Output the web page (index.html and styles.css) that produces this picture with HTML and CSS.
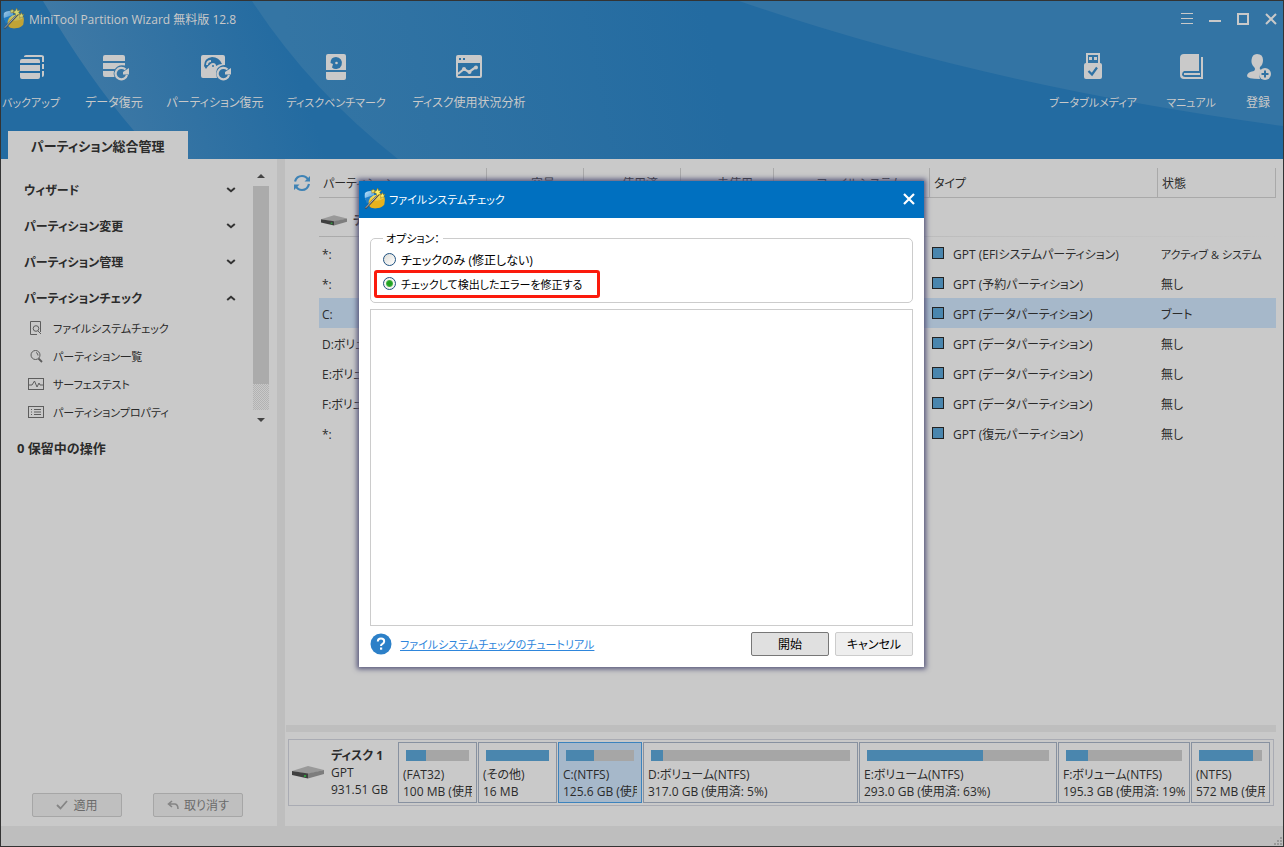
FILE: index.html
```html
<!DOCTYPE html>
<html lang="ja">
<head>
<meta charset="utf-8">
<title>MiniTool Partition Wizard 無料版 12.8</title>
<link rel="stylesheet" href="styles.css">
</head>
<body>
<svg class="defs" width="0" height="0" aria-hidden="true">
  <defs>
    <linearGradient id="gold" x1="0" y1="0" x2="0" y2="1"><stop offset="0" stop-color="#f8e765"/><stop offset="1" stop-color="#dc9a12"/></linearGradient>
    <linearGradient id="sky" x1="0" y1="0" x2="1" y2="1"><stop offset="0" stop-color="#c5e6fa"/><stop offset="1" stop-color="#2b8ad4"/></linearGradient>
    <symbol id="logo" viewBox="0 0 24 24">
      <path d="M1 6Q2 3 10 3L12 10 3 14Q0 12 1 6Z" fill="url(#sky)"/>
      <path d="M1 11L10 8 9 14 3 17Z" fill="#1f7fca"/>
      <path d="M5 18Q4 9 14 7Q23 6 22.500 13L22 18Q20 22 12 22Q6 22 5 18Z" fill="url(#gold)"/>
      <path d="M8 13Q15 16 22.500 11L22 18Q19 22 12 22Q6 22 5.500 18Z" fill="#e8b21c"/>
      <path d="M1.500 22.500L16 7" stroke="#4b4b4b" stroke-width="2.200"/><path d="M2 21.500L16 6.500" stroke="#d8d8d8" stroke-width=".8"/>
      <path d="M15 0l1 3 3-.5-2 2.500 2 2.500-3-.5-2 2-.5-3-3-1.500 3-1.500zM20 5l.8 2 2.200 0-1.500 1.700.8 2.300-2.300-1-1.800 1.200.2-2.300-1.600-1.500 2.200-.3zM10 1l.8 1.500 1.700.3-1.200 1.200.2 1.700-1.500-.8-1.500.8.3-1.700-1.300-1.200 1.700-.3z" fill="#fff06a" stroke="#8d6a12" stroke-width=".5"/>
    </symbol>
    <symbol id="drive" viewBox="0 0 32 13">
      <path d="M0 5L16 0 32 4 16 8Z" fill="#999"/><path d="M0 5L16 7.500V12.500L0 9Z" fill="#3f3f3f"/><path d="M16 7.500L32 4V8L16 12.500Z" fill="#7d7d7d"/><rect x="12" y="9" width="2" height="2" fill="#2d9b3b"/>
    </symbol>
    <symbol id="chev" viewBox="0 0 10 6"><path d="M1.200 1L5 4.200 8.800 1" fill="none" stroke="#333" stroke-width="2"/></symbol>
  </defs>
</svg>
<div class="window">
  <header class="banner">
    <svg class="banner-art" viewBox="0 0 1282 158" preserveAspectRatio="none" aria-hidden="true">
      <defs>
        <linearGradient id="g1" gradientUnits="userSpaceOnUse" x1="60" y1="60" x2="270" y2="-10"><stop offset="0" stop-color="#3f79a5"/><stop offset="1" stop-color="#236ba1"/></linearGradient>
        <linearGradient id="g2" gradientUnits="userSpaceOnUse" x1="290" y1="60" x2="700" y2="-20"><stop offset="0" stop-color="#3475a4"/><stop offset="1" stop-color="#236ba1"/></linearGradient>
      </defs>
      <path d="M42 0Q88 78 134 131L152 158H600V0Z" fill="url(#g1)"/>
      <path d="M251 0Q310 90 397 158H1000V0Z" fill="url(#g2)"/>
      <path d="M738 0Q980 84 1282 125V0Z" fill="#3374a4"/>
    </svg>
    <div class="titlebar">
      <svg class="app-logo"><use href="#logo"/></svg>
      <h1 class="app-title">MiniTool Partition Wizard 無料版 12.8</h1>
      <div class="win-buttons">
        <button aria-label="メニュー"><svg width="14" height="14"><path d="M1 1.500H13M1 6.500H13M1 11.500H13" stroke="#c9c9c9"/></svg></button>
        <button aria-label="最小化"><svg width="14" height="14"><path d="M1 9H13" stroke="#c9c9c9" stroke-width="2"/></svg></button>
        <button aria-label="最大化"><svg width="14" height="14"><rect x="2" y="2" width="10" height="10" fill="none" stroke="#c9c9c9" stroke-width="2"/></svg></button>
        <button aria-label="閉じる"><svg width="14" height="14"><path d="M2 2L12 12M12 2L2 12" stroke="#c9c9c9" stroke-width="2"/></svg></button>
      </div>
    </div>
    <nav class="toolbar">
      <div class="tools tools-left">
        <button class="kana"><svg width="30" height="30" viewBox="0 0 30 30"><g fill="#c9c9c9"><path d="M4 11V9Q4 7 6 7H22Q24 7 24 9V11Z"/><path d="M4 13H24V19H4ZM4 21H24V25Q24 27 22 27H6Q4 27 4 25Z"/><path d="M8 5V4.500Q8 3 10 3H25Q28 3 28 5V10H26V5ZM26 12H28V17H26ZM26 19H28V23Q28 25 26 25Z"/></g></svg><span>バックアップ</span></button>
        <button><svg width="30" height="30" viewBox="0 0 30 30"><path fill="#c9c9c9" d="M4 5Q4 3 6 3H24Q26 3 26 5V9H4ZM4 11H26V13.500Q19 12 16 17H4ZM4 19H15Q14 22 15.500 25H6Q4 25 4 23Z"/><path d="M26.500 17.500A5.800 5.800 0 1 0 28 23" fill="none" stroke="#c9c9c9" stroke-width="2.200"/><path d="M24 20V22.500H30V16Z" fill="#c9c9c9"/></svg><span>データ復元</span></button>
        <button><svg width="32" height="30" viewBox="0 0 32 30"><path fill="#c9c9c9" fill-rule="evenodd" d="M2 5Q2 3 4 3H24Q26 3 26 5V13Q21 13 18 17L17 21 18 26H4Q2 26 2 24ZM5 14Q5 6 13 5Q20 5 23 12Q20 12 17 14Q12 9 7 17Z"/><path d="M8 13Q8 9 12 9" fill="none" stroke="#c9c9c9" stroke-width="2"/><circle cx="14" cy="14" r="3" fill="#c9c9c9"/><circle cx="14" cy="14" r="1" fill="#2d70a2"/><path d="M28.500 17.500A5.800 5.800 0 1 0 30 23" fill="none" stroke="#c9c9c9" stroke-width="2.200"/><path d="M26 20V22.500H32V16Z" fill="#c9c9c9"/></svg><span>パーティション復元</span></button>
        <button class="kana"><svg width="30" height="30" viewBox="0 0 30 30"><path fill="#c9c9c9" d="M5 4Q5 2 7 2H23Q25 2 25 4V18H5ZM5 20H25V26Q25 28 23 28H7Q5 28 5 26Z"/><path d="M15 5A6 6 0 1 1 11 15.500L12 12 9.500 11Q9.500 5 15 5Z" fill="#2d72a5"/><circle cx="15.500" cy="11" r="1.300" fill="#c9c9c9"/></svg><span>ディスクベンチマーク</span></button>
        <button><svg width="30" height="30" viewBox="0 0 30 30"><path fill="#c9c9c9" fill-rule="evenodd" d="M2 5Q2 3 4 3H26Q28 3 28 5V24Q28 26 26 26H4Q2 26 2 24ZM4 11V24H26V11ZM5 6V8H7V6ZM9 6V8H11V6Z"/><path d="M4 22L10 17 15 20 22 15" fill="none" stroke="#c9c9c9" stroke-width="2.200"/><g fill="#c9c9c9"><circle cx="10" cy="17" r="2"/><circle cx="15.500" cy="20" r="2"/><circle cx="22" cy="15.500" r="2"/></g></svg><span>ディスク使用状況分析</span></button>
      </div>
      <div class="tools tools-right">
        <button class="kana"><svg width="30" height="30" viewBox="0 0 30 30"><path fill="#c9c9c9" fill-rule="evenodd" d="M8 1H22V11Q24 11 24 13V25Q24 27 22 27H8Q6 27 6 25V13Q6 11 8 11ZM10 3V11H20V3ZM11 5H14V8H11ZM16 5H19V8H16Z"/><path d="M10.500 19L14 22.500 19 15.500" fill="none" stroke="#2f72a4" stroke-width="2.200"/></svg><span>ブータブルメディア</span></button>
        <button class="kana"><svg width="30" height="30" viewBox="0 0 30 30"><path fill="#c9c9c9" fill-rule="evenodd" d="M4 6Q4 2 8 2H23V19H8Q6 20 6 23Q7 25 9 25H25V5H27V27H8Q4 27 4 23ZM8 21H24V23H8Z"/></svg><span>マニュアル</span></button>
        <button><svg width="30" height="30" viewBox="0 0 30 30"><path fill="#c9c9c9" d="M14 2Q20 2 20 8Q20 13 17 15Q16 18 19 18Q15 21 17 27Q4 27 4 24Q4 20 11 19Q13 17 11 15Q8 12 8.500 8Q9 2 14 2Z"/><circle cx="22" cy="22" r="6" fill="#c9c9c9"/><path d="M22 18.500V25.500M18.500 22H25.500" stroke="#3072a3" stroke-width="2"/></svg><span>登録</span></button>
      </div>
    </nav>
    <div class="tabs" role="tablist"><button class="tab" role="tab" aria-selected="true">パーティション総合管理</button></div>
  </header>

  <main class="workspace">
    <aside class="sidebar">
      <div class="side-scroll">
        <div class="side-list">
          <button class="group">ウィザード<svg class="chev"><use href="#chev"/></svg></button>
          <button class="group">パーティション変更<svg class="chev"><use href="#chev"/></svg></button>
          <button class="group">パーティション管理<svg class="chev"><use href="#chev"/></svg></button>
          <button class="group" aria-expanded="true">パーティションチェック<svg class="chev chev-open"><use href="#chev"/></svg></button>
          <ul class="actions">
            <li><button><svg width="16" height="16" fill="none" stroke="#5d5d5d"><path d="M9 14.500H2.500V1.500H12.500V12"/><circle cx="8" cy="8.500" r="2.800"/><path d="M10 11L13 14"/></svg>ファイルシステムチェック</button></li>
            <li><button><svg width="16" height="16" fill="none" stroke="#5d5d5d"><circle cx="7.500" cy="7" r="4.500"/><path d="M8 4.500Q10 5 10 7.500"/><path d="M10.500 10.500L14 14" stroke-width="1.800"/></svg>パーティション一覧</button></li>
            <li><button><svg width="16" height="16" fill="none" stroke="#5d5d5d"><rect x=".5" y="2.500" width="15" height="11"/><path d="M1 9H4L6.500 5 9 11 11 7 12 9H15"/></svg>サーフェステスト</button></li>
            <li><button><svg width="16" height="16" fill="none" stroke="#5d5d5d"><rect x=".5" y="2.500" width="15" height="11"/><path d="M3 5.500H4M6 5.500H13M3 8H4M6 8H13M3 10.500H4M6 10.500H13" stroke-width="1.200"/></svg>パーティションプロパティ</button></li>
          </ul>
        </div>
        <div class="scrollbar" aria-hidden="true">
          <svg width="8" height="4"><path d="M0 4L4 0 8 4Z" fill="#444"/></svg>
          <div class="track"><div class="thumb"></div></div>
          <svg width="8" height="4"><path d="M0 0L4 4 8 0Z" fill="#444"/></svg>
        </div>
      </div>
      <h2 class="pending">0 保留中の操作</h2>
      <div class="side-buttons">
        <button disabled><svg width="12" height="10" fill="none" stroke="#858585" stroke-width="1.800"><path d="M1 5L4.500 8.500 11 1"/></svg>適用</button>
        <button disabled><svg width="12" height="10" fill="none" stroke="#858585" stroke-width="1.600"><path d="M5 1L1.500 4 5 7M1.500 4H8Q11 4.500 11 9"/></svg>取り消す</button>
      </div>
    </aside>

    <section class="content">
      <div class="list-pane">
        <button class="refresh" aria-label="更新"><svg width="18" height="18" fill="none" stroke="#3f83b5" stroke-width="2.200"><path d="M2 7.500Q3.500 2 9 2Q13 2 15 5.500M16 10Q14.500 16 9 16Q5 16 3 12.500"/><path d="M17 2V7.500H11.500ZM1 16V10.500H6.500Z" fill="#3f83b5" stroke="none"/></svg></button>
        <table class="volumes">
          <colgroup><col class="c-name"><col class="c-size"><col class="c-size"><col class="c-free"><col class="c-fs"><col class="c-type"><col></colgroup>
          <thead><tr><th>パーティション</th><th class="mid">容量</th><th class="mid">使用済</th><th class="mid">未使用</th><th class="mid">ファイルシステム</th><th>タイプ</th><th>状態</th></tr></thead>
          <tbody>
            <tr class="disk-row"><td colspan="7"><span><svg width="26" height="11"><use href="#drive"/></svg>ディスク 1</span></td></tr>
            <tr><td>*:</td><td></td><td></td><td></td><td></td><td class="type">GPT (EFIシステムパーティション)</td><td class="kana">アクティブ &amp; システム</td></tr>
            <tr><td>*:</td><td></td><td></td><td></td><td></td><td class="type">GPT (予約パーティション)</td><td>無し</td></tr>
            <tr class="selected"><td>C:</td><td></td><td></td><td></td><td></td><td class="type">GPT (データパーティション)</td><td>ブート</td></tr>
            <tr><td>D:ボリューム</td><td></td><td></td><td></td><td></td><td class="type">GPT (データパーティション)</td><td>無し</td></tr>
            <tr><td>E:ボリューム</td><td></td><td></td><td></td><td></td><td class="type">GPT (データパーティション)</td><td>無し</td></tr>
            <tr><td>F:ボリューム</td><td></td><td></td><td></td><td></td><td class="type">GPT (データパーティション)</td><td>無し</td></tr>
            <tr><td>*:</td><td></td><td></td><td></td><td></td><td class="type">GPT (復元パーティション)</td><td>無し</td></tr>
          </tbody>
        </table>
      </div>
      <div class="divider"></div>
      <div class="disk-map">
        <div class="disk-info">
          <svg width="32" height="13"><use href="#drive"/></svg>
          <div><strong>ディスク 1</strong><p>GPT</p><p>931.51 GB</p></div>
        </div>
        <div class="blocks">
          <div class="block"><div class="usage"><i style="width:32%"></i></div><p>(FAT32)</p><p>100 MB (使用済: 31%)</p></div>
          <div class="block"><div class="usage"><i style="width:100%"></i></div><p>(その他)</p><p>16 MB</p></div>
          <div class="block active"><div class="usage"><i style="width:41%"></i></div><p>C:(NTFS)</p><p>125.6 GB (使用済: 41%)</p></div>
          <div class="block"><div class="usage"><i style="width:6%"></i></div><p>D:ボリューム(NTFS)</p><p>317.0 GB (使用済: 5%)</p></div>
          <div class="block"><div class="usage"><i style="width:64%"></i></div><p>E:ボリューム(NTFS)</p><p>293.0 GB (使用済: 63%)</p></div>
          <div class="block"><div class="usage"><i style="width:19%"></i></div><p>F:ボリューム(NTFS)</p><p>195.3 GB (使用済: 19%)</p></div>
          <div class="block"><div class="usage"><i style="width:86%"></i></div><p>(NTFS)</p><p>572 MB (使用済: 85%)</p></div>
        </div>
      </div>
    </section>
  </main>
  <footer class="status"><svg width="10" height="10" fill="#999"><path d="M7 1h2v2H7zM4 4h2v2H4zM7 4h2v2H7zM1 7h2v2H1zM4 7h2v2H4zM7 7h2v2H7z"/></svg></footer>

  <div class="overlay">
    <form class="dialog" role="dialog" aria-labelledby="dlg-title">
      <div class="dialog-head">
        <svg class="app-logo"><use href="#logo"/></svg>
        <h2 id="dlg-title">ファイルシステムチェック</h2>
        <button type="button" class="dialog-close" aria-label="閉じる"><svg width="12" height="12"><path d="M1 1L11 11M11 1L1 11" stroke="#fff" stroke-width="2.200"/></svg></button>
      </div>
      <div class="dialog-body">
        <fieldset>
          <legend>オプション：</legend>
          <label class="option"><input type="radio" name="mode"><span>チェックのみ (修正しない)</span></label>
          <label class="option marked"><input type="radio" name="mode" checked><span>チェックして検出したエラーを修正する</span></label>
        </fieldset>
        <textarea class="log" aria-label="結果" readonly></textarea>
        <div class="dialog-foot">
          <svg width="22" height="22"><circle cx="11" cy="11" r="10.500" fill="#2c80c8"/><path d="M7.800 8.500Q7.800 5.500 11 5.500Q14.200 5.500 14.200 8.200Q14.200 9.800 12.500 10.800Q11 11.600 11 13" fill="none" stroke="#fff" stroke-width="2"/><rect x="10" y="14.500" width="2.200" height="2.200" fill="#fff"/></svg>
          <a href="#tutorial">ファイルシステムチェックのチュートリアル</a>
          <button type="button" class="primary">開始</button>
          <button type="button">キャンセル</button>
        </div>
      </div>
    </form>
  </div>
</div>
</body>
</html>
```

FILE: styles.css
```css
* { box-sizing: border-box; }

body, h1, h2, p, ul { margin: 0; padding: 0; }

body, button, input, textarea {
  font-family: "Open Sans", "Noto Sans CJK JP", sans-serif;
  font-size: 12px;
  font-feature-settings: "palt";
  color: #2b2b2b;
}

button { background: none; border: 0; padding: 0; white-space: nowrap; }

svg { flex: none; display: block; }

.kana { font-size: 11px; }

.defs { position: absolute; }

.window {
  position: relative;
  display: flex;
  flex-direction: column;
  min-height: 100vh;
  border: 1px solid #333;
  background: #c9c9c9;
}

/* Banner */
.banner { position: relative; background: #236ba1; }
.banner-art { position: absolute; inset: 0; width: 100%; height: 100%; }
.titlebar, .toolbar, .tabs { position: relative; display: flex; }
.titlebar { align-items: center; height: 36px; padding: 0 5px 0 2px; gap: 4px; }
.app-logo { width: 22px; height: 22px; }
.banner .app-logo { opacity: .8; }
.app-title { font-size: 12px; font-weight: 400; color: #c9c9c9; }
.win-buttons { display: flex; gap: 14px; margin-left: auto; }

.toolbar { justify-content: space-between; height: 94px; padding: 15px 11px 0 2px; }
.tools { display: grid; align-content: start; }
.tools-left { grid-template-columns: 56px 58px 92px 98px 116px; column-gap: 26px; }
.tools-right { grid-template-columns: 90px 50px 28px; column-gap: 28px; }
.tools button { display: flex; flex-direction: column; align-items: center; gap: 11px; color: #c9c9c9; line-height: 20px; }

.tabs { padding-left: 7px; }
.tab { height: 28px; padding: 0 23px; background: #c9c9c9; font-weight: 700; font-size: 13px; }

/* Sidebar */
.workspace { flex: 1; display: grid; grid-template-columns: 276px minmax(0, 1fr); }
.sidebar { display: flex; flex-direction: column; }
.side-scroll { display: flex; justify-content: space-between; padding: 13px 8px 0 23px; }
.side-list { width: 212px; }
.group { display: flex; align-items: center; justify-content: space-between; width: 100%; height: 36px; font-weight: 700; }
.chev { width: 10px; height: 6px; }
.chev-open { transform: rotate(180deg); }
.actions { list-style: none; margin-top: -2px; padding-left: 4px; }
.actions button { display: flex; align-items: center; gap: 9px; height: 28px; font-size: 11px; }
.scrollbar { display: flex; flex-direction: column; align-items: center; gap: 8px; width: 16px; padding-top: 2px; }
.track { width: 16px; height: 224px; background: repeating-conic-gradient(#b2b2b2 0 25%, #c9c9c9 0 50%) 0 0 / 2px 2px; }
.thumb { height: 198px; background: #ababab; }
.pending { margin: 12px 0 0 16px; font-size: 13px; line-height: 20px; }
.side-buttons { display: flex; gap: 31px; margin: auto 0 9px 31px; }
.side-buttons button { display: flex; align-items: center; justify-content: center; gap: 5px; width: 90px; height: 24px; border: 1px solid #a6a6a6; border-radius: 2px; background: #bfbfbf; color: #6b6b6b; }

/* Partition list */
.content { display: flex; flex-direction: column; padding-right: 7px; border-left: 8px solid #bebebe; }
.list-pane { flex: 1; display: flex; gap: 8px; padding: 9px 0 0 8px; }
.refresh { align-self: flex-start; margin-top: 6px; }
.volumes { flex: 1; table-layout: fixed; width: 0; border-collapse: separate; border-spacing: 0; align-self: flex-start; }
.c-name { width: 168px; }
.c-size { width: 97px; }
.c-free { width: 93px; }
.c-fs { width: 156px; }
.c-type { width: 228px; }
.volumes th { height: 30px; padding: 0 4px; border: solid #a9a9a9; border-width: 0 1px 1px 0; text-align: left; font-weight: 400; }
.volumes .mid { text-align: center; padding-left: 20px; }
.volumes td { height: 30px; padding: 2px 3px 0; white-space: nowrap; }
.volumes .disk-row td { height: 40px; padding: 4px 2px 0; font-weight: 700; background: linear-gradient(90deg, #aaa, #bbb 60%, #c9c9c9) 0 38px / 100% 1px no-repeat; }
.disk-row span { display: flex; align-items: center; gap: 6px; }
.selected td { background: #a6b8ca; }
.type::before { content: ""; display: inline-block; width: 10px; height: 10px; margin: 0 9px 0 -1px; border: 1px solid #222; background: #4a86ae; }

/* Disk map */
.divider { height: 7px; margin: 0 0 7px 1px; background: #bebebe; }
.disk-map { display: flex; min-height: 67px; margin: 0 2px 20px 3px; padding: 2px 3px; border: 1px solid #a9abb3; }
.disk-info { display: flex; align-items: center; gap: 7px; width: 106px; white-space: nowrap; line-height: 17px; }
.blocks { flex: 1; display: grid; grid-template-columns: 79fr 79fr 84fr 215fr 198fr 132fr 79fr; column-gap: 1px; }
.block { min-width: 0; padding: 7px 4px 0; border: 1px solid #8791a0; line-height: 17px; }
.block p { overflow: hidden; white-space: nowrap; }
.block.active { background: #a6b8ca; border-color: #3c83bd; }
.usage { height: 11px; margin: 0 3px 5px; background: #a6a6a6; }
.usage i { display: block; height: 100%; background: #4a86ae; }

.status { display: flex; justify-content: flex-end; align-items: flex-end; height: 20px; background: #bebebe; }

/* Dialog */
.overlay { position: absolute; inset: 0; display: grid; place-items: center; padding-right: 1px; }
.dialog { width: 565px; background: #fff; box-shadow: 0 0 5px 2px #55557a; }
.dialog-head { display: flex; align-items: center; height: 37px; padding: 0 9px 0 5px; gap: 3px; background: #0070c0; }
.dialog-head h2 { font-size: 11px; font-weight: 400; color: #fff; }
.dialog-close { margin-left: auto; }
.dialog-body { display: flex; flex-direction: column; gap: 6px; padding: 13px 11px 11px; color: #000; }
fieldset { margin: 0; padding: 3px 3px 4px; border: 1px solid #ccc; border-radius: 5px; }
legend { margin-left: 9px; padding: 0 3px; font-size: 11px; line-height: 16px; }
.option { display: flex; align-items: center; gap: 5px; height: 20px; padding-left: 9px; }
.marked { width: 226px; height: 28px; padding-left: 6px; border: 3px solid #fb1a0c; border-radius: 3px; font-size: 11px; white-space: nowrap; }
.option input { appearance: none; flex: none; width: 13px; height: 13px; margin: 0; border: 1px solid #1f5180; border-radius: 50%; background: linear-gradient(135deg, #dcdcd7, #fff); }
.option input:checked { background: radial-gradient(circle, #21a121 0 2px, #45b545 3px, #f4f4f0 4px); }
.log { display: block; width: 100%; height: 317px; resize: none; border: 1px solid #ccc; background: #fff; }
.dialog-foot { display: flex; align-items: center; gap: 6px; }
.dialog-foot a { margin-right: auto; padding-left: 2px; font-size: 11px; color: #2e86dc; }
.dialog-foot button { width: 78px; height: 24px; border: 1px solid #ccc; border-radius: 2px; background: #eee; color: #000; }
.dialog-foot .primary { border-color: #777; background: #e0e0e0; }
```
